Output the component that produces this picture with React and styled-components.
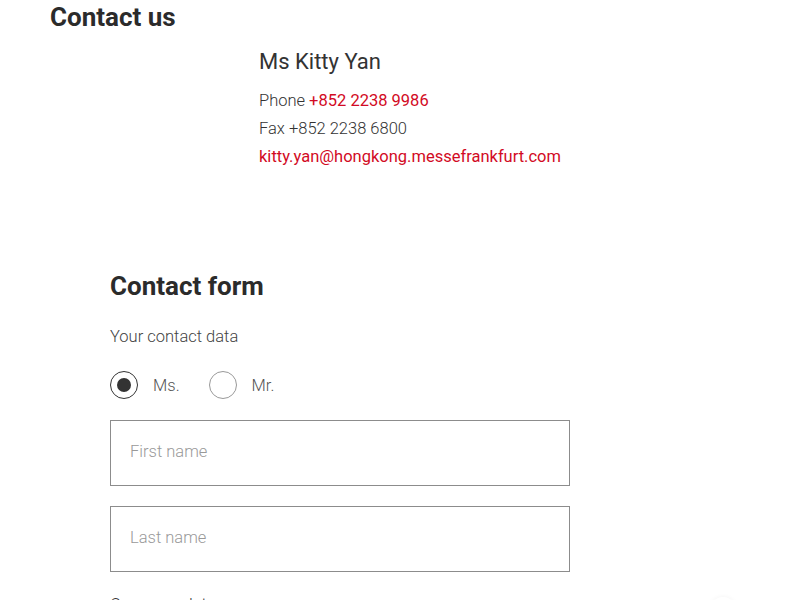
import React, { useState } from 'react'
import styled, { createGlobalStyle } from 'styled-components'

const GlobalStyle = createGlobalStyle`
  body {
    margin: 0;
    background: #fff;
    font-family: Roboto, 'Liberation Sans', sans-serif;
    color: #333;
  }
`

const Page = styled.div`
  padding: 2px 0 0 50px;
  overflow: hidden;
  height: 598px;
`

const Title = styled.h2`
  margin: 0;
  font-size: 26px;
  line-height: 30px;
  font-weight: 700;
  color: #2b2b2b;
`

const Person = styled.div`
  margin: 16px 0 0 209px;
`

const Name = styled.div`
  font-size: 22px;
  line-height: 28px;
  font-weight: 400;
  color: #333;
  margin-bottom: 11px;
`

const Line = styled.div`
  font-size: 16.5px;
  line-height: 28px;
  font-weight: 300;
  color: #333;
`

const Red = styled.a`
  color: #d20a24;
  text-decoration: none;
  font-weight: 400;
`

const Form = styled.form`
  margin: 100px 0 0 60px;
  width: 460px;
`

const Hint = styled.div`
  margin-top: 22px;
  font-size: 16.5px;
  line-height: 28px;
  font-weight: 300;
  color: #444;
`

const RadioRow = styled.div`
  display: flex;
  align-items: center;
  gap: 15px;
  margin-top: 20px;
`

const RadioLabel = styled.label`
  display: flex;
  align-items: center;
  gap: 15px;
  font-size: 16.5px;
  font-weight: 300;
  color: #555;
  cursor: pointer;
  margin-right: 14px;
`

const Circle = styled.span`
  width: 26px;
  height: 26px;
  border-radius: 50%;
  border: 1px solid ${p => (p.$on ? '#333' : '#999')};
  display: flex;
  align-items: center;
  justify-content: center;

  &::after {
    content: '';
    width: 14px;
    height: 14px;
    border-radius: 50%;
    background: #333;
    display: ${p => (p.$on ? 'block' : 'none')};
  }
`

const Fields = styled.div`
  display: flex;
  flex-direction: column;
  gap: 20px;
  margin-top: 21px;
`

const Input = styled.input`
  box-sizing: border-box;
  width: 460px;
  height: 66px;
  border: 1px solid #8c8c8c;
  padding: 0 19px 3px;
  font-family: Roboto, 'Liberation Sans', sans-serif;
  font-size: 16.5px;
  font-weight: 300;
  color: #333;
  outline: none;

  &::placeholder {
    color: #999;
  }
`

const Sub = styled.div`
  margin-top: 19px;
  font-size: 16.5px;
  line-height: 28px;
  font-weight: 300;
  color: #333;
`

const TopButton = styled.div`
  position: fixed;
  right: 64px;
  top: 597px;
  width: 26px;
  height: 26px;
  border-radius: 50%;
  background: #fff;
  box-shadow: 0 0 5px rgba(0, 0, 0, 0.05);
`

export default function App() {
  const [title, setTitle] = useState('ms')

  return (
    <>
      <GlobalStyle />
      <Page>
        <Title>Contact us</Title>
        <Person>
          <Name>Ms Kitty Yan</Name>
          <Line>Phone <Red href="#">+852 2238 9986</Red></Line>
          <Line>Fax +852 2238 6800</Line>
          <Line><Red href="#">kitty.yan@hongkong.messefrankfurt.com</Red></Line>
        </Person>

        <Form onSubmit={e => e.preventDefault()}>
          <Title>Contact form</Title>
          <Hint>Your contact data</Hint>
          <RadioRow>
            <RadioLabel onClick={() => setTitle('ms')}>
              <Circle $on={title === 'ms'} />
              Ms.
            </RadioLabel>
            <RadioLabel onClick={() => setTitle('mr')}>
              <Circle $on={title === 'mr'} />
              Mr.
            </RadioLabel>
          </RadioRow>
          <Fields>
            <Input placeholder="First name" />
            <Input placeholder="Last name" />
          </Fields>
          <Sub>Company data</Sub>
        </Form>
      </Page>
      <TopButton />
    </>
  )
}
